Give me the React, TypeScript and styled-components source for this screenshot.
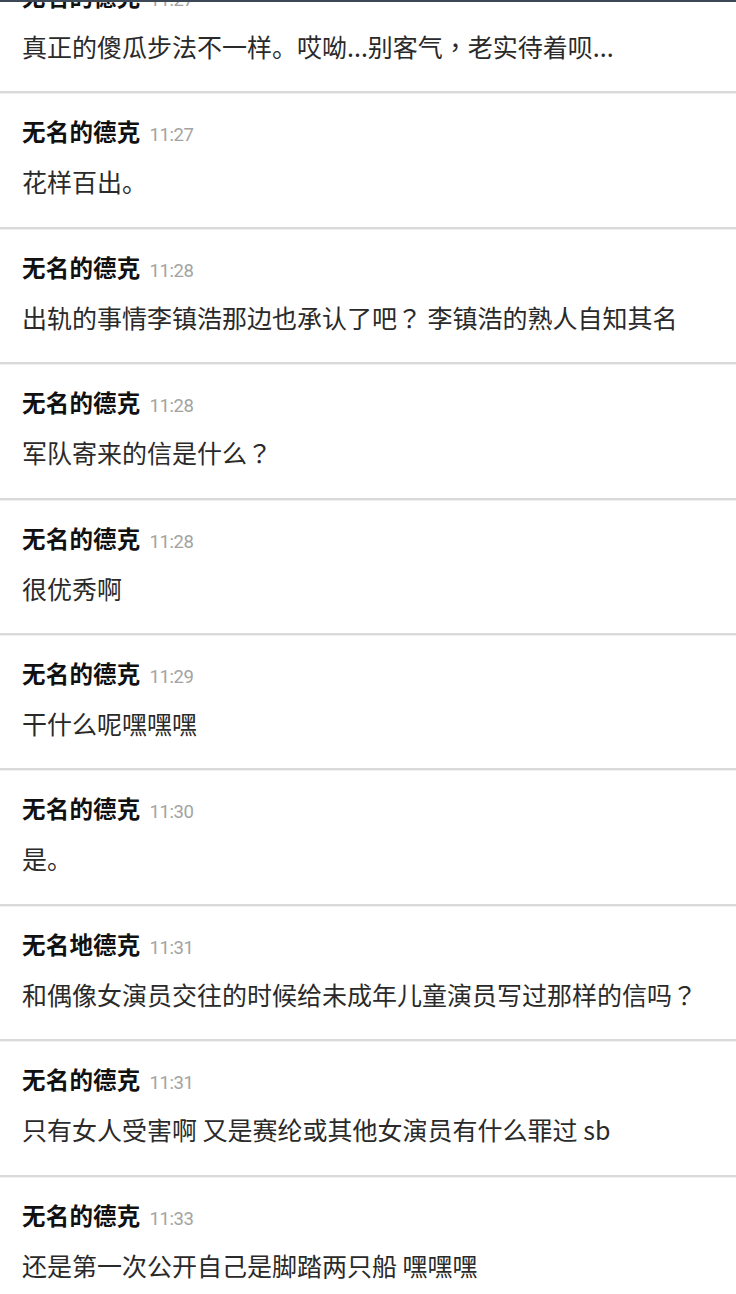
import React from "react";
import styled, { createGlobalStyle } from "styled-components";

const Global = createGlobalStyle`
  html, body {
    margin: 0;
    padding: 0;
    background: #ffffff;
    overflow: hidden;
  }
  body {
    font-family: "Noto Sans CJK SC", "Noto Sans", sans-serif;
  }
`;

const Screen = styled.div`
  width: 736px;
  height: 1294px;
  box-sizing: border-box;
  border-top: 2px solid #3d4856;
  overflow: hidden;
  background: #ffffff;
`;

const List = styled.ul`
  list-style: none;
  margin: -44px 0 0 0;
  padding: 0;
`;

const Item = styled.li`
  height: 135.4px;
  box-sizing: border-box;
  padding: 22px 22px 0 22px;
  border-bottom: 2px solid #dadada;
  box-shadow: 0 1px 0 #f0f0f0;
  display: flex;
  flex-direction: column;
  gap: 17px;
`;

const Header = styled.div`
  display: flex;
  align-items: baseline;
  gap: 9px;
  height: 32px;
  line-height: 32px;
`;

const Name = styled.span`
  font-family: "Noto Sans CJK SC", sans-serif;
  font-weight: 700;
  font-size: 23.5px;
  color: #111111;
  letter-spacing: 0.2px;
`;

const Time = styled.span`
  font-family: Roboto, "Liberation Sans", sans-serif;
  font-size: 18.5px;
  color: #a3a3a3;
  letter-spacing: -0.4px;
`;

const Message = styled.div`
  font-family: "Noto Sans CJK SC", sans-serif;
  font-size: 25px;
  line-height: 34px;
  color: #2a2a2a;
  white-space: nowrap;
`;

const Punct = styled.span`
  font-family: "Noto Sans CJK TC", "Noto Sans CJK SC", sans-serif;
  display: inline-block;
  width: 1em;
  text-align: center;
`;

type Msg = { name: string; time: string; text: string };

const messages: Msg[] = [
  { name: "无名的德克", time: "11:27", text: "真正的傻瓜步法不一样。哎呦...别客气，老实待着呗..." },
  { name: "无名的德克", time: "11:27", text: "花样百出。" },
  { name: "无名的德克", time: "11:28", text: "出轨的事情李镇浩那边也承认了吧？ 李镇浩的熟人自知其名" },
  { name: "无名的德克", time: "11:28", text: "军队寄来的信是什么？" },
  { name: "无名的德克", time: "11:28", text: "很优秀啊" },
  { name: "无名的德克", time: "11:29", text: "干什么呢嘿嘿嘿" },
  { name: "无名的德克", time: "11:30", text: "是。" },
  { name: "无名地德克", time: "11:31", text: "和偶像女演员交往的时候给未成年儿童演员写过那样的信吗？" },
  { name: "无名的德克", time: "11:31", text: "只有女人受害啊 又是赛纶或其他女演员有什么罪过 sb" },
  { name: "无名的德克", time: "11:33", text: "还是第一次公开自己是脚踏两只船 嘿嘿嘿" },
];

function renderText(text: string) {
  return text.split(/([？，])/).map((part, i) =>
    part === "？" || part === "，" ? <Punct key={i}>{part}</Punct> : <React.Fragment key={i}>{part}</React.Fragment>
  );
}

export default function App() {
  return (
    <Screen>
      <Global />
      <List>
        {messages.map((m, i) => (
          <Item key={i}>
            <Header>
              <Name>{m.name}</Name>
              <Time>{m.time}</Time>
            </Header>
            <Message>{renderText(m.text)}</Message>
          </Item>
        ))}
      </List>
    </Screen>
  );
}
